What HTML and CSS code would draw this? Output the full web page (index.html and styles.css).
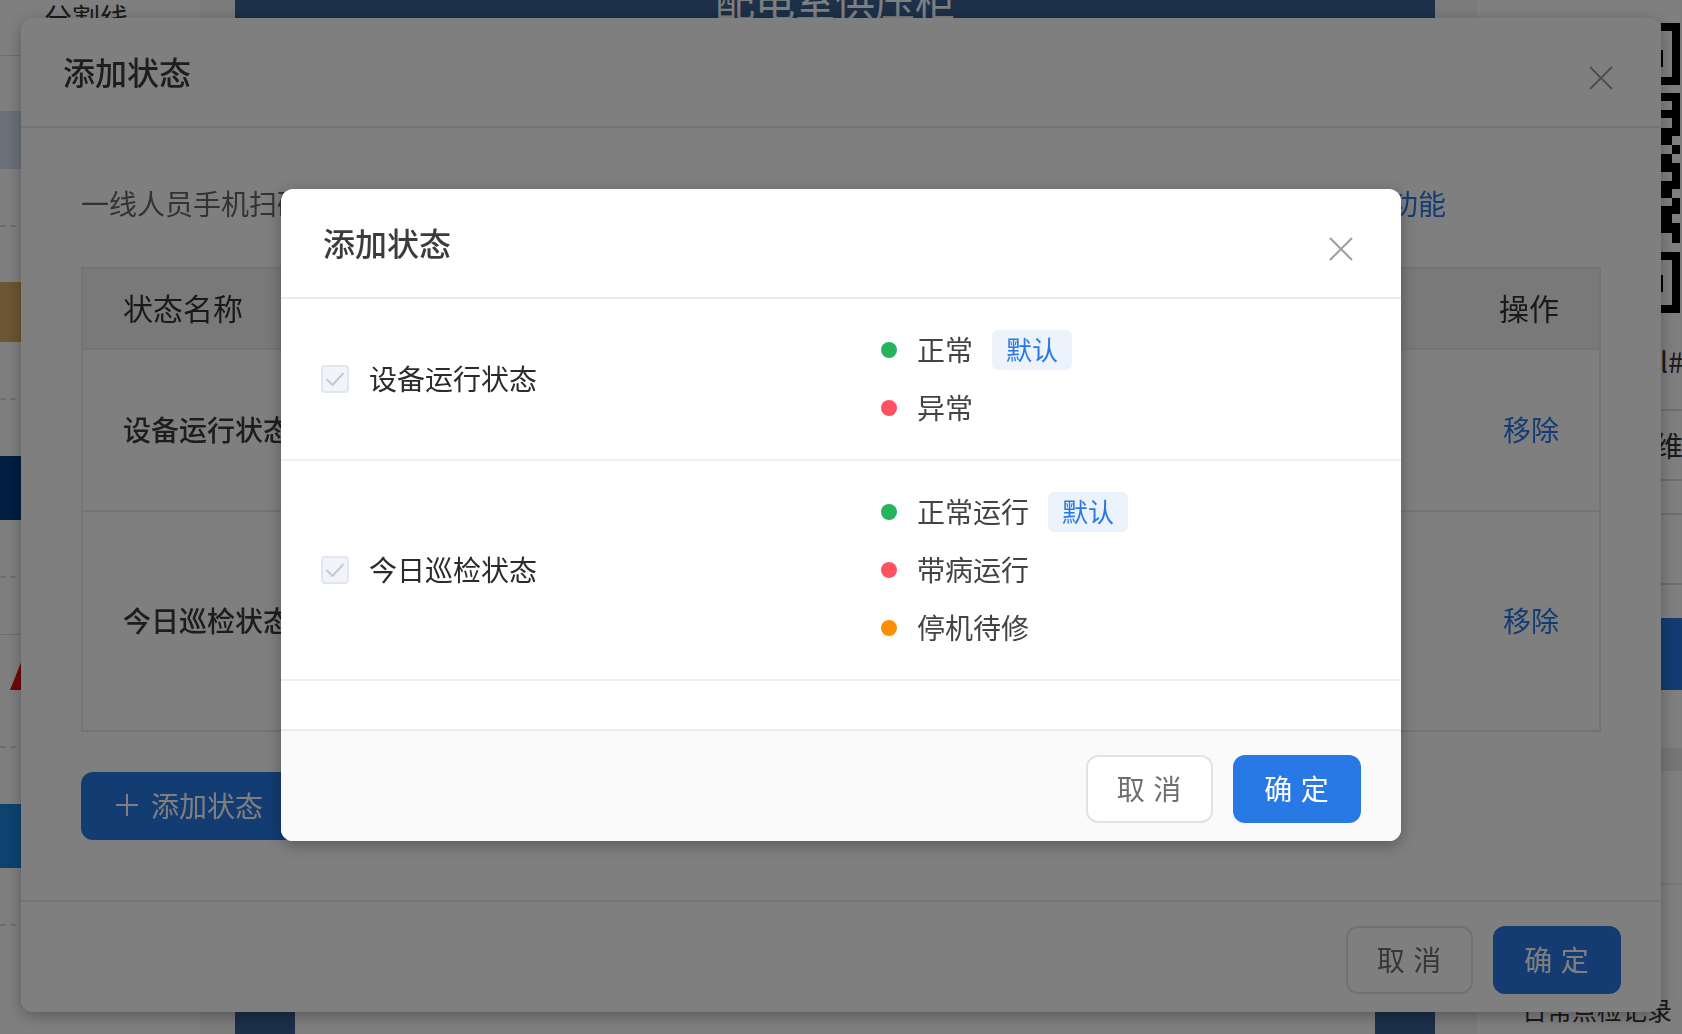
FILE: index.html

```html
<!DOCTYPE html>
<html lang="zh-CN">
<head>
  <meta charset="UTF-8" />
  <meta name="viewport" content="width=device-width, initial-scale=1.0" />
  <title>添加状态</title>
  <link rel="stylesheet" href="styles.css">
</head>
<body>

  <!-- Page behind the dialogs -->
  <div class="page">
    <aside class="side-left">
      <div class="side-title">分割线</div>
      <div class="widget widget-a"><div class="thumb thumb-grey"></div></div>
      <div class="widget widget-b"><div class="thumb thumb-gold"></div></div>
      <div class="widget widget-c"><div class="thumb thumb-navy"></div></div>
      <div class="widget-head"></div>
      <div class="widget widget-d"><div class="triangle"></div></div>
      <div class="widget widget-e"><div class="thumb thumb-blue"></div></div>
    </aside>

    <main class="canvas">
      <div class="cabinet">
        <div class="cabinet-title">配电室供压柜</div>
        <div class="cabinet-body"></div>
      </div>
    </main>

    <aside class="side-right">
      <svg class="qr" width="21" height="290" viewBox="0 0 21 290" fill="#000">
        <rect x="0" y="0" width="19" height="8" />
        <rect x="11" y="0" width="8" height="62" />
        <rect x="0" y="54" width="19" height="8" />
        <rect x="0" y="27" width="2" height="17" />
        <rect x="0" y="70" width="19" height="8" />
        <rect x="11" y="78" width="8" height="9" />
        <rect x="0" y="87" width="19" height="8" />
        <rect x="11" y="95" width="8" height="10" />
        <rect x="0" y="105" width="19" height="8" />
        <rect x="0" y="113" width="11" height="9" />
        <rect x="11" y="122" width="8" height="9" />
        <rect x="0" y="131" width="11" height="9" />
        <rect x="0" y="140" width="19" height="9" />
        <rect x="11" y="149" width="8" height="9" />
        <rect x="0" y="158" width="19" height="8" />
        <rect x="0" y="166" width="11" height="9" />
        <rect x="11" y="175" width="8" height="8" />
        <rect x="0" y="183" width="19" height="8" />
        <rect x="0" y="191" width="11" height="9" />
        <rect x="0" y="200" width="19" height="10" />
        <rect x="11" y="210" width="8" height="10" />
        <rect x="0" y="229" width="19" height="8" />
        <rect x="11" y="229" width="8" height="61" />
        <rect x="0" y="282" width="19" height="8" />
        <rect x="0" y="252" width="2" height="17" />
      </svg>
      <div class="info-row info-code">l#</div>
      <div class="info-row info-name"><span>维护记录</span></div>
      <div class="info-line info-gap"></div>
      <div class="info-line info-tall"></div>
      <div class="info-btn"></div>
      <div class="info-band"></div>
      <div class="info-line info-last"></div>
      <div class="info-link">日常点检记录</div>
    </aside>
  </div>

  <!-- First dialog -->
  <div class="modal modal-outer">
    <div class="modal-head">
      <div class="modal-title">添加状态</div>
      <svg class="close-icon" width="24" height="24" viewBox="0 0 24 24"><path d="M1 1 L23 23 M23 1 L1 23" /></svg>
    </div>
    <div class="outer-body">
      <div class="desc">
        <span>一线人员手机扫码后可查看并更新设备状态</span>
        <a class="link">查看功能</a>
      </div>
      <div class="status-table">
        <div class="table-row table-head"><span>状态名称</span><span>操作</span></div>
        <div class="table-row table-row-a"><span class="table-name">设备运行状态</span><a class="link">移除</a></div>
        <div class="table-row table-row-b"><span class="table-name">今日巡检状态</span><a class="link">移除</a></div>
      </div>
      <button class="btn btn-add">
        <svg width="24" height="24" viewBox="0 0 24 24"><path d="M12 1 V23 M1 12 H23" /></svg>
        添加状态
      </button>
    </div>
    <div class="outer-foot">
      <button class="btn btn-cancel">取 消</button>
      <button class="btn btn-ok">确 定</button>
    </div>
  </div>

  <div class="mask"></div>

  <!-- Second dialog -->
  <div class="modal modal-inner">
    <div class="modal-head">
      <div class="modal-title">添加状态</div>
      <svg class="close-icon" width="24" height="24" viewBox="0 0 24 24"><path d="M1 1 L23 23 M23 1 L1 23" /></svg>
    </div>
    <div class="inner-body">
      <div class="state-row state-row-first">
        <div class="state-name">
          <span class="checkbox"><svg width="18" height="14" viewBox="0 0 18 14"><path d="M0.5 7 L6.5 13 L17.5 1" /></svg></span>
          <span class="state-label">设备运行状态</span>
        </div>
        <div class="state-values">
          <div class="value"><i class="dot dot-green"></i>正常<span class="tag">默认</span></div>
          <div class="value"><i class="dot dot-red"></i>异常</div>
        </div>
      </div>
      <div class="state-row">
        <div class="state-name">
          <span class="checkbox"><svg width="18" height="14" viewBox="0 0 18 14"><path d="M0.5 7 L6.5 13 L17.5 1" /></svg></span>
          <span class="state-label">今日巡检状态</span>
        </div>
        <div class="state-values">
          <div class="value"><i class="dot dot-green"></i>正常运行<span class="tag">默认</span></div>
          <div class="value"><i class="dot dot-red"></i>带病运行</div>
          <div class="value"><i class="dot dot-orange"></i>停机待修</div>
        </div>
      </div>
    </div>
    <div class="inner-foot">
      <button class="btn btn-cancel">取 消</button>
      <button class="btn btn-ok">确 定</button>
    </div>
  </div>

</body>
</html>
```

FILE: styles.css

```css
* { margin: 0; padding: 0; box-sizing: border-box; }
html, body {
  height: 100%;
  overflow: hidden;
  font-family: "Noto Sans CJK SC", "Noto Sans", sans-serif;
  color: #333;
}

/* page behind the dialogs */
.page {
  display: flex;
  height: 1034px;
  background: #fff;
}
.side-left {
  width: 200px;
  flex: none;
  background: #fff;
}
.side-title {
  height: 56px;
  padding-left: 44px;
  font-size: 28px;
  line-height: 34px;
  border-bottom: 1px solid #ddd;
}
.widget {
  display: flex;
  align-items: center;
  border-bottom: 2px dashed #ddd;
}
.widget-a { height: 171px; padding-bottom: 2px; }
.widget-b { height: 173px; padding-bottom: 2px; }
.widget-c { height: 178px; }
.widget-head { height: 57px; border-bottom: 1px solid #ddd; }
.widget-d { height: 113px; align-items: flex-start; padding: 25px 0 0 10px; }
.widget-e { height: 178px; }
.thumb { width: 170px; }
.thumb-grey { height: 58px; background: #d8e2f2; }
.thumb-gold { height: 60px; background: #dcab68; }
.thumb-navy { height: 64px; background: #003e84; }
.thumb-blue { height: 64px; background: #1c86e0; }
.triangle {
  width: 24px;
  height: 30px;
  background: #e01010;
  clip-path: polygon(50% 0, 100% 100%, 0 100%);
}

.canvas {
  flex: 1;
  padding: 0 42px 0 35px;
  background: #f6f6f6;
}
.cabinet {
  display: flex;
  flex-direction: column;
  height: 100%;
  background: #386092;
}
.cabinet-title {
  height: 30px;
  margin-top: -22px;
  color: #fff;
  font-size: 40px;
  line-height: 44px;
  text-align: center;
  flex: none;
}
.cabinet-body {
  flex: 1;
  margin: 22px 60px 0;
  background: #fff;
}

.side-right {
  width: 205px;
  flex: none;
  overflow: hidden;
  background: #fff;
}
.qr {
  display: block;
  margin: 23px 0 0 184px;
}
.info-row {
  font-size: 28px;
  line-height: 36px;
  white-space: nowrap;
}
.info-code {
  height: 98px;
  padding: 30px 0 0 183px;
  border-bottom: 2px solid #ddd;
}
.info-name {
  height: 70px;
  padding: 16px 0 0 178px;
  border-bottom: 2px solid #ddd;
}
.info-line { border-bottom: 2px solid #ddd; }
.info-gap { height: 34px; }
.info-tall { height: 70px; }
.info-btn {
  height: 72px;
  margin: 33px 0 0 120px;
  background: #2678e6;
}
.info-band {
  height: 23px;
  margin-top: 58px;
  background: #ededed;
}
.info-last { height: 114px; border-color: #eee; }
.info-link {
  margin-top: 106px;
  padding-left: 45px;
  font-size: 25px;
  line-height: 36px;
  white-space: nowrap;
}

.mask {
  position: fixed;
  top: 0; left: 0;
  width: 100%;
  height: 100%;
  background: rgba(0, 0, 0, 0.5);
}

/* dialogs */
.modal {
  position: fixed;
  display: flex;
  flex-direction: column;
  background: #fff;
  border-radius: 12px;
  box-shadow: 0 4px 16px rgba(0, 0, 0, 0.3);
}
.modal-outer {
  left: 21px;
  top: 18px;
  width: 1640px;
  height: 994px;
}
.modal-inner {
  left: 281px;
  top: 189px;
  width: 1120px;
  height: 652px;
}
.modal-head {
  display: flex;
  justify-content: space-between;
  align-items: center;
  height: 110px;
  padding: 0 48px 0 42px;
  border-bottom: 2px solid #ebebeb;
  flex: none;
}
.modal-title {
  font-size: 32px;
  font-weight: 500;
  line-height: 44px;
  margin-top: -3px;
  color: #3c3c3c;
}
.close-icon {
  margin-top: 12px;
  fill: none;
  stroke: #9d9da2;
  stroke-width: 2;
}

.outer-body {
  flex: 1;
  padding: 55px 60px 0;
}
.desc {
  display: flex;
  justify-content: space-between;
  padding-right: 155px;
  font-size: 28px;
  line-height: 40px;
  color: #666;
}
.link { color: #2678e6; }
.status-table {
  margin-top: 44px;
  border: 2px solid #e8e8ee;
}
.table-row {
  display: flex;
  justify-content: space-between;
  align-items: center;
  padding: 0 40px 2px;
  font-size: 28px;
}
.table-head {
  height: 81px;
  padding-bottom: 4px;
  font-size: 30px;
  background: #f3f3f3;
  border-bottom: 2px solid #e8e8ee;
}
.table-row-a { height: 162px; border-bottom: 2px solid #e8e8ee; }
.table-row-b { height: 218px; }
.table-name { font-weight: 500; color: #3a3a3a; }
.btn {
  height: 68px;
  padding-bottom: 2px;
  font-family: inherit;
  font-size: 28px;
  border: none;
  border-radius: 12px;
  cursor: pointer;
}
.btn-add {
  display: flex;
  align-items: center;
  gap: 12px;
  width: 215px;
  margin-top: 40px;
  padding-left: 34px;
  color: #fff;
  background: #2678e6;
}
.btn-add svg {
  fill: none;
  stroke: #fff;
  stroke-width: 2;
}
.btn-cancel {
  width: 127px;
  letter-spacing: 1px;
  color: #6e6e6e;
  background: #fff;
  border: 2px solid #e2e2e2;
}
.btn-ok {
  width: 128px;
  letter-spacing: 1px;
  color: #fff;
  background: #2878e5;
}
.outer-foot, .inner-foot {
  display: flex;
  justify-content: flex-end;
  gap: 20px;
  flex: none;
  padding-right: 40px;
}
.outer-foot {
  height: 112px;
  padding-top: 24px;
  border-top: 2px solid #ebebeb;
}

.inner-body { flex: 1; }
.state-row {
  display: grid;
  grid-template-columns: 600px 1fr;
  align-items: center;
  padding: 31px 0;
  border-bottom: 2px solid #eef0f5;
}
.state-name {
  display: flex;
  align-items: center;
  gap: 20px;
  padding-left: 40px;
  font-size: 28px;
  color: #2b2b2b;
}
.state-label { margin-top: -2px; }
.checkbox {
  display: flex;
  align-items: center;
  justify-content: center;
  width: 28px;
  height: 28px;
  background: #f2f4fc;
  border: 2px solid #e3e6ef;
  border-radius: 4px;
}
.checkbox svg {
  flex: none;
  fill: none;
  stroke: #c6c8d0;
  stroke-width: 2;
}
.state-values {
  display: flex;
  flex-direction: column;
  gap: 18px;
}
.value {
  display: flex;
  align-items: center;
  height: 40px;
  padding-bottom: 2px;
  font-size: 28px;
  color: #444;
}
.dot {
  width: 16px;
  height: 16px;
  margin: 2px 20px 0 0;
  border-radius: 50%;
}
.dot-green { background: #27b35c; }
.dot-red { background: #ff5260; }
.dot-orange { background: #fa9000; }
.tag {
  flex: none;
  width: 80px;
  height: 40px;
  margin: 2px 0 0 19px;
  font-size: 26px;
  line-height: 38px;
  text-align: center;
  color: #2878e5;
  background: #ecf3fd;
  border-radius: 6px;
}
.inner-foot {
  height: 112px;
  padding-top: 24px;
  background: #fafafa;
  border-top: 2px solid #ebebeb;
  border-radius: 0 0 12px 12px;
}
```
